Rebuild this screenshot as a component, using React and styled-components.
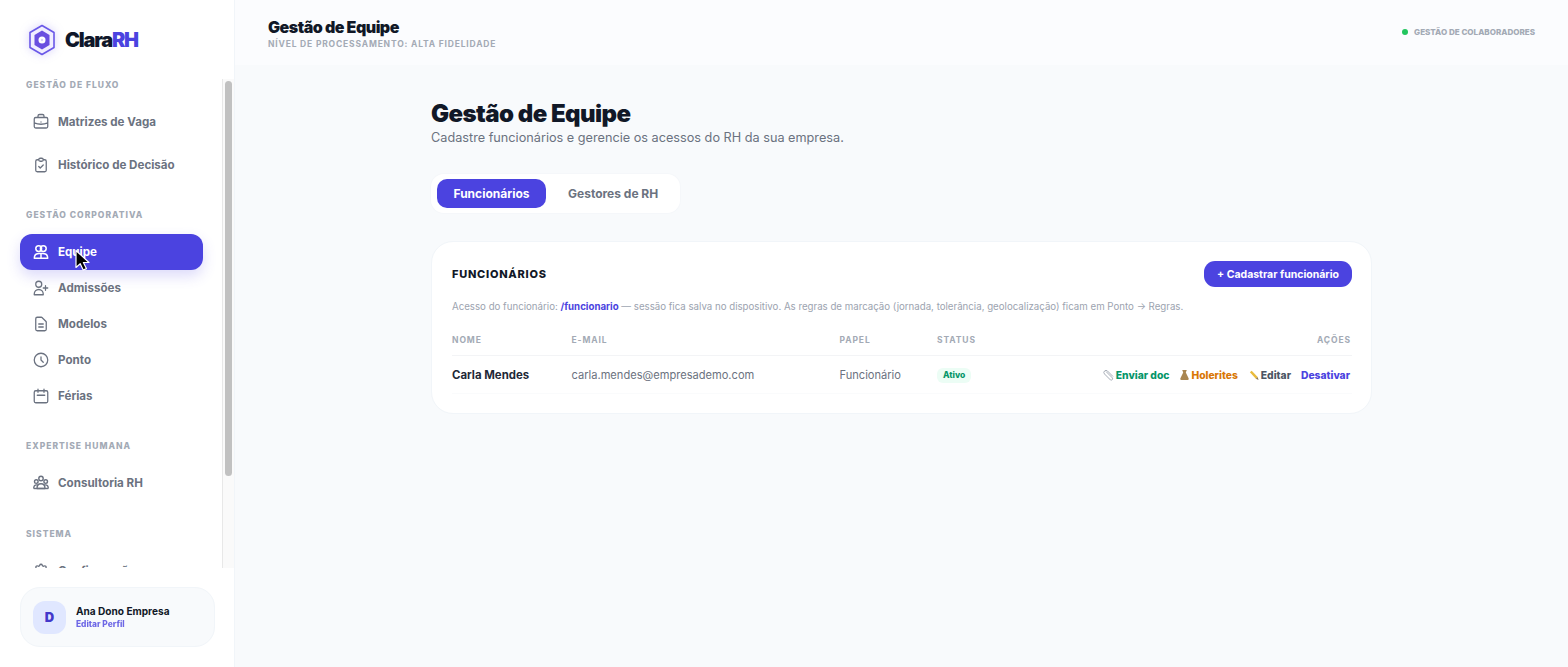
import React from 'react';
import styled, { createGlobalStyle } from 'styled-components';
import {
  HiOutlineBriefcase, HiOutlineClipboardCheck, HiOutlineUserAdd, HiOutlineDocumentText,
  HiOutlineClock, HiOutlineCalendar, HiOutlineCog,
} from 'react-icons/hi';

const indigo = '#4b43e0';

const Global = createGlobalStyle`
  * { box-sizing: border-box; }
  html, body { margin: 0; height: 100%; overflow: hidden; }
  body { font-family: Inter, "Noto Sans", sans-serif; background: #f8fafc; color: #0f172a; }
`;
const Shell = styled.div`display: flex; height: 667px; width: 1568px; position: relative;`;
const Side = styled.aside`
  position: relative; width: 235px; flex: none; height: 100%; background: #fff; border-right: 1px solid #f1f5f9;
  display: flex; flex-direction: column;
`;
const Brand = styled.div`height: 79px; flex: none; display: flex; align-items: center; gap: 7px; padding: 0 0 0 26px;`;
const BrandName = styled.div`font-size: 20px; font-weight: 900; letter-spacing: -1.2px; color: #0f172a; span { color: ${indigo}; }`;
const Nav = styled.nav`flex: 1; min-height: 0; overflow: hidden; padding: 1px 20px 0;`;
const Group = styled.div`margin-bottom: ${p => p.$after}px;`;
const Label = styled.div`
  font-size: 8.5px; line-height: 11px; font-weight: 800; letter-spacing: 1px; color: #a3aab5;
  margin-left: 6px; margin-bottom: ${p => p.$gap}px;
`;
const Item = styled.a`
  display: flex; align-items: center; gap: 8px; height: ${p => p.$h}px; width: 183px; padding-left: 12px;
  border-radius: 12px; font-size: 11.6px; font-weight: 700; color: ${p => p.$active ? '#fff' : '#6b7280'};
  background: ${p => p.$active ? indigo : 'transparent'};
  box-shadow: ${p => p.$active ? '0 6px 14px rgba(79,70,229,.2)' : 'none'};
  svg { flex: none; }
`;
const Track = styled.div`
  position: absolute; top: 79px; right: 0; bottom: 99px; width: 12px; background: #fafafa; border-left: 1px solid #e8e8e8;
`;
const Thumb = styled.div`width: 7px; height: 395px; margin: 2px 0 0 2px; border-radius: 4px; background: #c1c1c1;`;
const Foot = styled.div`height: 99px; flex: none; padding: 19px 20px 20px;`;
const UserCard = styled.div`
  height: 60px; width: 195px; border-radius: 20px; background: #f8fafc; border: 1px solid #f1f5f9;
  display: flex; align-items: center; gap: 10px; padding-left: 12px;
`;
const Avatar = styled.div`
  width: 33px; height: 33px; border-radius: 12px; background: #e0e7ff; color: #4338ca;
  display: flex; align-items: center; justify-content: center; font-size: 13px; font-weight: 900;
`;
const UserName = styled.div`font-size: 10.1px; line-height: 13px; font-weight: 700; color: #111827;`;
const UserLink = styled.div`font-size: 8.4px; line-height: 12px; font-weight: 800; color: ${indigo}; opacity: .8;`;
const Main = styled.main`flex: 1; min-width: 0; display: flex; flex-direction: column;`;
const Top = styled.header`
  height: 65px; flex: none; background: #fbfcfe; display: flex; align-items: center; justify-content: space-between;
  padding: 0 33px;
`;
const TopTitle = styled.div`font-size: 16px; line-height: 20px; font-weight: 900; letter-spacing: -.5px; color: #111827; margin-top: 2px;`;
const TopSub = styled.div`font-size: 8.5px; line-height: 11px; font-weight: 700; letter-spacing: .82px; color: #a3aab5; margin-top: 2px;`;
const Status = styled.div`display: flex; align-items: center; gap: 6px; font-size: 8.05px; font-weight: 800; color: #a3aab5; margin-bottom: 1px;`;
const Dot = styled.i`width: 6px; height: 6px; border-radius: 50%; background: #22c55e;`;
const Content = styled.div`width: 941px; margin-left: 196px; padding-top: 34px;`;
const H1 = styled.h1`margin: 0; font-size: 24px; line-height: 29px; font-weight: 900; letter-spacing: -.55px; color: #111827;`;
const Sub = styled.p`margin: 2px 0 0; font-size: 12.7px; line-height: 16px; font-weight: 400; color: #6b7280;`;
const Tabs = styled.div`
  display: flex; width: fit-content; margin-top: 28px; padding: 5px 6px; gap: 6px; height: 39px; border-radius: 13px; background: #fff;
  box-shadow: 0 0 0 1px #f5f7fa;
`;
const Tab = styled.button`
  border: 0; height: 29px; padding: 0 ${p => p.$active ? 16.5 : 16}px; border-radius: 10px; font: 700 12px Inter, sans-serif;
  background: ${p => p.$active ? indigo : 'transparent'}; color: ${p => p.$active ? '#fff' : '#6b7280'};
`;
const Card = styled.section`
  margin-top: 28px; height: 173px; background: #fff; border: 1px solid #f1f5f9; border-radius: 22px; padding: 19px 19px 0 20px;
`;
const CardHead = styled.div`display: flex; justify-content: space-between; align-items: center; height: 26px;`;
const CardTitle = styled.h2`margin: 0; font-size: 11px; font-weight: 800; letter-spacing: .75px; color: #111827;`;
const AddBtn = styled.button`
  border: 0; height: 26px; width: 148px; border-radius: 11px; background: ${indigo}; color: #fff; font: 700 10.5px Inter, sans-serif; padding: 0;
`;
const Note = styled.p`
  margin: 13px 0 0; font-size: 9.7px; line-height: 14px; color: #9ca3af; white-space: nowrap;
  b { color: ${indigo}; font-weight: 700; }
`;
const Table = styled.table`width: 100%; border-collapse: collapse; margin-top: 19px; table-layout: fixed;`;
const Th = styled.th`
  height: 22px; padding: 0 ${p => p.$right ? 1 : 0}px 7px 0; text-align: ${p => p.$right ? 'right' : 'left'}; font-size: 8.5px; font-weight: 700; letter-spacing: .9px;
  color: #a3aab5; border-bottom: 1px solid #f3f4f6;
`;
const Td = styled.td`
  height: 38px; padding: 2px 0 0; font-size: ${p => p.$strong ? 11.4 : 11.1}px; color: ${p => p.$strong ? '#1f2937' : '#6b7280'};
  font-weight: ${p => p.$strong ? 700 : 400}; border-bottom: 1px solid #fafbfc; white-space: nowrap;
`;
const Badge = styled.span`
  display: inline-flex; align-items: center; height: 15px; padding: 0 6px; border-radius: 6px; background: #ecfdf5; color: #059669;
  font-size: 8.5px; font-weight: 800;
`;
const Actions = styled.div`display: flex; justify-content: flex-end; gap: 10px; padding-right: 2px;`;
const Action = styled.span`
  display: inline-flex; align-items: center; font-size: 10.3px; font-weight: 800; color: ${p => p.$c}; white-space: nowrap;
  svg { margin-right: 1px; flex: none; }
`;
const Pointer = styled.svg`position: absolute; left: 74px; top: 249px; pointer-events: none;`;

const Logo = () => (
  <svg width="32" height="32" viewBox="0 0 32 32" fill="none" style={{ flex: 'none', filter: 'drop-shadow(0 0 5px rgba(99,80,240,.25))' }}>
    <path d="M16 1.500 28 8.500v15l-12 7-12-7v-15z" stroke="#6a58e8" strokeWidth="1.6" strokeLinejoin="round" fill="#f1eeff" />
    <path d="M16 6.500 23.500 11v10L16 25.500 8.500 21V11z" fill="#6a4fe0" />
    <circle cx="16" cy="16" r="3.500" fill="#fff" />
    <circle cx="16" cy="16" r="1.200" fill="#d9d0fb" />
  </svg>
);
const TeamIcon = () => (
  <svg width="18" height="18" viewBox="0 0 18 18" fill="none" stroke="currentColor" strokeWidth="1.5" strokeLinejoin="round">
    <circle cx="6.700" cy="5.600" r="2.900" />
    <circle cx="11.300" cy="5.600" r="2.900" />
    <path d="M2.300 15.300c0-3 1.900-4.800 4.700-4.800h4c2.800 0 4.700 1.800 4.700 4.800z" />
    <path d="M9 10.500v4.800" />
  </svg>
);
const GroupIcon = () => (
  <svg width="18" height="18" viewBox="0 0 18 18" fill="none" stroke="currentColor" strokeWidth="1.4" strokeLinejoin="round">
    <circle cx="9" cy="4.500" r="2.200" />
    <circle cx="4.300" cy="7.600" r="1.800" />
    <circle cx="13.700" cy="7.600" r="1.800" />
    <path d="M1.700 14.500c0-2.400 1-3.600 2.900-3.600h1.200M16.300 14.500c0-2.400-1-3.600-2.900-3.600h-1.200" />
    <path d="M5 14.500c0-3 1.500-4.700 4-4.700s4 1.700 4 4.700z" />
    <path d="M1.700 14.500h14.600" />
  </svg>
);
const Clip = () => (
  <svg width="12" height="12" viewBox="0 0 12 12" fill="none" stroke="#a8aeb8" strokeWidth="1">
    <path d="M3 2.500 9.500 9a1.500 1.500 0 0 1-2 2L1.500 5a2 2 0 0 1 3-3l5.500 5.500" />
  </svg>
);
const Bag = () => (
  <svg width="11" height="12" viewBox="0 0 11 12">
    <path d="M3.200 1h4.600L6.800 3.500 9.700 9.500Q10 11 8.500 11h-6Q1 11 1.300 9.500L4.200 3.500z" fill="#a98652" />
  </svg>
);
const Pencil = () => (
  <svg width="12" height="11" viewBox="0 0 12 12">
    <path d="M1.500 2.500 3.500 .8 10 7.500 8 9.500z" fill="#e9bb3c" />
    <path d="M8 9.500 10 7.500l1 3.500z" fill="#8b7a5a" />
  </svg>
);

const hi = Icon => () => <Icon size={18} strokeWidth={1.7} />;

const groups = [
  { label: 'GESTÃO DE FLUXO', gap: 9, h: 43, after: 24, items: [[hi(HiOutlineBriefcase), 'Matrizes de Vaga'], [hi(HiOutlineClipboardCheck), 'Histórico de Decisão']] },
  { label: 'GESTÃO CORPORATIVA', gap: 13, h: 36, after: 27, items: [[TeamIcon, 'Equipe', true], [hi(HiOutlineUserAdd), 'Admissões'], [hi(HiOutlineDocumentText), 'Modelos'], [hi(HiOutlineClock), 'Ponto'], [hi(HiOutlineCalendar), 'Férias']] },
  { label: 'EXPERTISE HUMANA', gap: 13, h: 36, after: 28, items: [[GroupIcon, 'Consultoria RH']] },
  { label: 'SISTEMA', gap: 13, h: 36, after: 0, items: [[hi(HiOutlineCog), 'Configurações']] },
];

export default function App() {
  return (
    <Shell>
      <Global />
      <Side>
        <Brand><Logo /><BrandName>Clara<span>RH</span></BrandName></Brand>
        <Nav>
          {groups.map(g => (
            <Group key={g.label} $after={g.after}>
              <Label $gap={g.gap}>{g.label}</Label>
              {g.items.map(([Icon, text, active]) => (
                <Item key={text} $h={g.h} $active={active}>
                  <Icon />{text}
                </Item>
              ))}
            </Group>
          ))}
        </Nav>
        <Track><Thumb /></Track>
        <Foot>
          <UserCard>
            <Avatar>D</Avatar>
            <div><UserName>Ana Dono Empresa</UserName><UserLink>Editar Perfil</UserLink></div>
          </UserCard>
        </Foot>
      </Side>
      <Main>
        <Top>
          <div><TopTitle>Gestão de Equipe</TopTitle><TopSub>NÍVEL DE PROCESSAMENTO: ALTA FIDELIDADE</TopSub></div>
          <Status><Dot />GESTÃO DE COLABORADORES</Status>
        </Top>
        <Content>
          <H1>Gestão de Equipe</H1>
          <Sub>Cadastre funcionários e gerencie os acessos do RH da sua empresa.</Sub>
          <Tabs>
            <Tab $active>Funcionários</Tab>
            <Tab>Gestores de RH</Tab>
          </Tabs>
          <Card>
            <CardHead>
              <CardTitle>FUNCIONÁRIOS</CardTitle>
              <AddBtn>+ Cadastrar funcionário</AddBtn>
            </CardHead>
            <Note>Acesso do funcionário: <b>/funcionario</b> — sessão fica salva no dispositivo. As regras de marcação (jornada, tolerância, geolocalização) ficam em Ponto → Regras.</Note>
            <Table>
              <colgroup><col style={{ width: 119.500 }} /><col style={{ width: 268 }} /><col style={{ width: 97.500 }} /><col style={{ width: 90 }} /><col /></colgroup>
              <thead><tr><Th>NOME</Th><Th>E-MAIL</Th><Th>PAPEL</Th><Th>STATUS</Th><Th $right>AÇÕES</Th></tr></thead>
              <tbody>
                <tr>
                  <Td $strong>Carla Mendes</Td>
                  <Td>carla.mendes@empresademo.com</Td>
                  <Td>Funcionário</Td>
                  <Td><Badge>Ativo</Badge></Td>
                  <Td>
                    <Actions>
                      <Action $c="#059669"><Clip />Enviar doc</Action>
                      <Action $c="#d97706"><Bag />Holerites</Action>
                      <Action $c="#4b5563"><Pencil />Editar</Action>
                      <Action $c={indigo}>Desativar</Action>
                    </Actions>
                  </Td>
                </tr>
              </tbody>
            </Table>
          </Card>
        </Content>
      </Main>
      <Pointer width="18" height="24" viewBox="0 0 18 24">
        <path d="M2 1.500v17l4.200-3.800 3 6.300 3.200-1.400-3-6.100h5.600z" fill="#000" stroke="#fff" strokeWidth="1.200" strokeLinejoin="round" />
      </Pointer>
    </Shell>
  );
}
